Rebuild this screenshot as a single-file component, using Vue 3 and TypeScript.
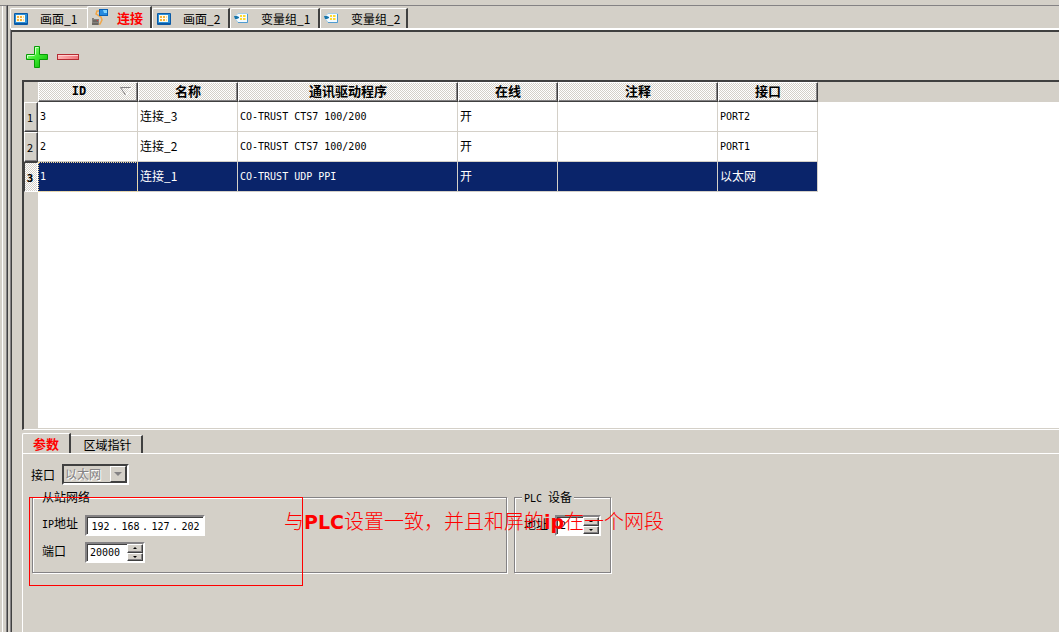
<script setup lang="ts">
import { ref } from 'vue'

interface DocTab { label: string; icon: 'screen' | 'link' | 'tag' }
interface Connection { id: string; name: string; driver: string; online: string; note: string; port: string }

const tabs: DocTab[] = [
  { label: '画面_1', icon: 'screen' },
  { label: '连接', icon: 'link' },
  { label: '画面_2', icon: 'screen' },
  { label: '变量组_1', icon: 'tag' },
  { label: '变量组_2', icon: 'tag' },
]
const columns = ['ID', '名称', '通讯驱动程序', '在线', '注释', '接口']
const rows: Connection[] = [
  { id: '3', name: '连接_3', driver: 'CO-TRUST CTS7 100/200', online: '开', note: '', port: 'PORT2' },
  { id: '2', name: '连接_2', driver: 'CO-TRUST CTS7 100/200', online: '开', note: '', port: 'PORT1' },
  { id: '1', name: '连接_1', driver: 'CO-TRUST UDP PPI', online: '开', note: '', port: '以太网' },
]
const activeTab = ref(1)
const selected = ref(2)
const activePane = ref(0)
const octets = ref(['192', '168', '127', '202'])
const port = ref('20000')
const address = ref('2')
const isLatin = (text: string): boolean => /^[\x20-\x7e]*$/.test(text)
</script>

<template>
  <div class="window">
    <div class="dock-edge"></div>
    <div class="workspace">
      <nav class="doc-tabs">
        <button v-for="(tab, i) in tabs" :key="tab.label" type="button" :class="['doc-tab', tab.icon, { active: i === activeTab }]" @click="activeTab = i">
          <svg v-if="tab.icon === 'screen'" width="14" height="12" viewBox="0 0 14 12">
            <rect width="14" height="12" rx="1" fill="#0a5aa6" />
            <rect x="1" y="1" width="12" height="9" fill="#2b8fd8" />
            <rect x="2" y="2" width="9" height="7" fill="#fffbe6" />
            <path d="M3 3h2v2H3zM6 3h2v2H6zM3 6h2v2H3zM6 6h2v2H6z" fill="#f5b13c" />
            <path d="M9 3h1v2H9zM9 6h1v2H9z" fill="#f8d898" />
          </svg>
          <svg v-else-if="tab.icon === 'link'" width="17" height="17" viewBox="0 0 17 17">
            <path d="M8 2H5L4 5l5 3 1 3-2 4H6" fill="none" stroke="#f0a648" stroke-width="1.500" />
            <rect x="7" y="0" width="9" height="7" fill="#0860b4" />
            <path d="M8 1h7v5H8z" fill="#2489df" /><path d="M11 1h4v3h-3z" fill="#80d4ff" />
            <path d="M0 9h2v1h5v6H0z" fill="#85807c" /><path d="M1 12h5M0 15h6" stroke="#55504d" /><path d="M5 11h1v1H5z" fill="#d33" />
          </svg>
          <svg v-else width="15" height="11" viewBox="0 0 15 11">
            <path d="M4 .5h9.500v9H4L1.500 6V3z" fill="#f4fbff" stroke="#a5cfe8" />
            <path d="M4 9.500h9.500V1" fill="none" stroke="#4e9bd0" />
            <path d="M0 3h3l2 1v1L3 6H1z" fill="#1976ac" />
            <path d="M6 2h2v2H6zM9 2h2v2H9zM6 5h2v2H6zM9 5h2v2H9z" fill="#ffd92e" />
            <path d="M11 2h1v2h-1zM11 5h1v2h-1z" fill="#ffec8a" />
          </svg>
          <span>{{ tab.label }}</span>
        </button>
      </nav>
      <main class="document">
        <div class="tools">
          <button type="button" aria-label="添加">
            <svg width="22" height="22" viewBox="0 0 22 22">
              <defs><linearGradient id="plusFill" x1="0" y1="0" x2="1" y2="1"><stop stop-color="#baffb0" /><stop offset=".45" stop-color="#43ed35" /><stop offset="1" stop-color="#05b500" /></linearGradient></defs>
              <path d="M8.500.5h5v8h8v5h-8v8h-5v-8h-8v-5h8z" fill="url(#plusFill)" stroke="#079c05" />
              <path d="M9.500 8.500v-7h3M1.500 12v-2.500h7" fill="none" stroke="#d0ffc8" />
            </svg>
          </button>
          <button type="button" aria-label="删除">
            <svg width="22" height="6" viewBox="0 0 22 6">
              <defs><linearGradient id="minusFill"><stop stop-color="#ffb5b5" /><stop offset="1" stop-color="#ee747b" /></linearGradient></defs>
              <rect x=".5" y=".5" width="21" height="5" fill="url(#minusFill)" stroke="#b52b32" /><path d="M1 1.500h20" stroke="#ffd0d0" />
            </svg>
          </button>
        </div>
        <section class="grid">
          <div class="head-fill"></div>
          <div class="row-fill"></div>
          <table>
            <colgroup><col class="c-index"><col class="c-id"><col class="c-name"><col class="c-driver"><col class="c-online"><col class="c-note"><col class="c-port"></colgroup>
            <thead>
              <tr>
                <th class="corner"></th>
                <th v-for="(column, i) in columns" :key="column" scope="col" :class="{ sorted: i === 0 }">
                  {{ column }}
                  <svg v-if="i === 0" class="sort" width="12" height="9" viewBox="0 0 12 9"><path d="M11 .5H.5L5.500 8" fill="none" stroke="#848284" /><path d="M11.500 0L6 8.500" stroke="#fff" /></svg>
                </th>
              </tr>
            </thead>
            <tbody>
              <tr v-for="(row, i) in rows" :key="row.id" :class="{ selected: i === selected }" @click="selected = i">
                <th scope="row">{{ i + 1 }}</th>
                <td v-for="(text, key) in row" :key="key" :class="{ latin: isLatin(text) }">{{ text }}</td>
              </tr>
            </tbody>
          </table>
        </section>
        <section class="settings">
          <nav class="pane-tabs">
            <button v-for="(name, i) in ['参数', '区域指针']" :key="name" type="button" :class="{ active: i === activePane }" @click="activePane = i">{{ name }}</button>
          </nav>
          <div class="pane">
            <div class="interface">
              <label for="interface">接口</label>
              <div class="select">
                <select id="interface" disabled><option>以太网</option></select>
                <span class="drop"></span>
              </div>
            </div>
            <div class="groups">
              <section class="group network" aria-labelledby="network-title">
                <h2 id="network-title">从站网络</h2>
                <div class="field">
                  <label for="ip-0"><span class="latin">IP</span>地址</label>
                  <div class="ip">
                    <template v-for="(_, i) in octets" :key="i">
                      <input :id="`ip-${i}`" v-model="octets[i]" :aria-label="`IP地址 ${i + 1}`"><span v-if="i < 3">.</span>
                    </template>
                  </div>
                </div>
                <div class="field">
                  <label for="port">端口</label>
                  <div class="spin"><input id="port" v-model="port"><span class="arrows"><button type="button" aria-label="增加"></button><button type="button" class="down" aria-label="减少"></button></span></div>
                </div>
              </section>
              <section class="group device" aria-labelledby="device-title">
                <h2 id="device-title"><span class="latin">PLC </span>设备</h2>
                <div class="field">
                  <label for="address">地址</label>
                  <div class="spin small"><input id="address" v-model="address"><span class="arrows"><button type="button" aria-label="增加"></button><button type="button" class="down" aria-label="减少"></button></span></div>
                </div>
              </section>
              <div class="marker"></div>
              <p class="remark">与<b>PLC</b>设置一致，并且和屏的<b>ip</b>在一个网段</p>
            </div>
          </div>
        </section>
      </main>
    </div>
  </div>
</template>

<style>
body { margin: 0; background: #d4d0c8; }
</style>

<style scoped>
* { box-sizing: border-box; }
.window { display: flex; min-height: 100vh; background: #d4d0c8; color: #000; font: 12px/16px "Noto Sans CJK SC", sans-serif; overflow: hidden; }
button, input, select { font: inherit; color: inherit; margin: 0; padding: 0; border: 0; border-radius: 0; background: none; }
svg { display: block; flex: none; }
.latin { font-family: "DejaVu Sans Mono", monospace; font-size: 10px; }
.dock-edge { flex: none; width: 8px; margin-top: 5px; border-top: 1px solid #848284; border-right: 1px solid #404040; box-shadow: inset -1px 0 #848284, inset 2px 0 #d4d0c8, inset 3px 0 #fff; }
.workspace { flex: 1; min-width: 0; display: flex; flex-direction: column; margin-top: 5px; border-top: 1px solid #848284; padding-left: 2px; }
.doc-tabs { display: flex; align-items: flex-end; height: 22px; }
.doc-tab { display: flex; align-items: center; height: 20px; padding: 0 8px 0 3px; gap: 12px; border-top: 1px solid #fff; border-left: 1px solid #fff; border-right: 2px solid #404040; border-top-left-radius: 2px; white-space: nowrap; }
.doc-tab.screen { width: 78px; padding-left: 4px; }
.doc-tab.screen:first-child { border-right: 0; width: 77px; padding-left: 3px; }
.doc-tab.tag { width: 90px; }
.doc-tab.tag:last-child { width: 88px; }
.doc-tab.link { height: 22px; width: 65px; gap: 8px; padding-left: 4px; }
.doc-tab.active { color: #f00; font-weight: 700; font-size: 13px; }
.document { flex: 1; display: flex; flex-direction: column; border-top: 2px solid #fff; border-left: 1px solid #848284; box-shadow: inset 1px 2px #404040; padding-left: 11px; }
.tools { display: flex; align-items: center; gap: 9px; height: 50px; padding: 4px 0 0 4px; }
.grid { position: relative; height: 350px; background: #fff; border-top: 2px solid #404040; border-left: 2px solid #404040; border-bottom: 1px solid #fff; box-shadow: inset 0 -1px #d4d0c8; }
.head-fill { position: absolute; inset: 0 0 auto 0; height: 20px; background: #d4d0c8; }
.row-fill { position: absolute; inset: 0 auto 0 0; width: 14px; background: #d4d0c8; }
table { position: relative; width: 794px; table-layout: fixed; border-collapse: separate; border-spacing: 0; }
.c-index { width: 14px; } .c-id, .c-name, .c-online, .c-port { width: 100px; } .c-driver { width: 220px; } .c-note { width: 160px; }
th, td { padding: 0; }
thead th { position: relative; height: 20px; padding-bottom: 2px; font-size: 13px; line-height: 16px; border: solid; border-width: 1px; border-color: #fff #404040 #404040 #fff; background: repeating-conic-gradient(#fff 0 25%, #d4d0c8 0 50%) 0 0 / 2px 2px; box-shadow: inset -1px -1px #848284; }
thead th.corner { border: 0; background: #d4d0c8; box-shadow: none; }
thead th.sorted { padding-right: 18px; font-family: "DejaVu Sans Mono", monospace; font-size: 12px; }
.sort { position: absolute; right: 5px; top: 4px; }
tbody th { height: 30px; padding-right: 2px; font-size: 11px; font-weight: 400; border: solid; border-width: 1px; border-color: #fff #404040 #404040 #fff; box-shadow: inset -1px -1px #848284; }
tbody td { height: 30px; padding: 0 2px 2px; border-right: 1px solid #d4d0c8; border-bottom: 1px solid #d4d0c8; white-space: nowrap; }
tbody td.latin { padding-bottom: 0; }
.selected td { background: #0a246a; color: #fff; }
.selected td:nth-child(2) { outline: 1px dotted #f5db95; outline-offset: -1px; }
.selected th { font-weight: 700; border-color: #404040 #fff #fff #404040; box-shadow: none; background: repeating-conic-gradient(#fff 0 25%, #d4d0c8 0 50%) 0 0 / 2px 2px; }
.settings { flex: 1; display: flex; flex-direction: column; padding-top: 3px; }
.pane-tabs { display: flex; align-items: flex-end; height: 20px; }
.pane-tabs button { height: 18px; width: 72px; padding-left: 3px; border-top: 1px solid #fff; border-right: 2px solid #404040; }
.pane-tabs button.active { width: 49px; height: 20px; padding-left: 0; border-left: 1px solid #fff; border-radius: 2px 0 0 0; color: #f00; font-size: 13px; font-weight: 700; }
.pane { flex: 1; border-left: 1px solid #fff; border-top: 1px solid #fff; padding: 10px 0 0 8px; }
.interface { display: flex; align-items: center; gap: 7px; height: 21px; }
.select { display: flex; align-items: center; width: 67px; height: 21px; border: 2px solid; border-color: #404040 #fff #fff #404040; box-shadow: inset -1px -1px #404040; padding: 0 1px 1px 0; }
.select select { appearance: none; flex: 1; min-width: 0; padding-left: 1px; color: #848284; opacity: 1; text-shadow: 1px 1px #fff; }
.drop { width: 16px; height: 16px; display: grid; place-items: center; border: 1px solid; border-color: #fff #404040 #404040 #fff; }
.drop::after { content: ""; border: 4px solid transparent; border-top-color: #848284; border-bottom: 0; }
.groups { position: relative; display: flex; gap: 7px; padding: 12px 0 0 1px; }
.group { position: relative; height: 76px; border: 1px solid #848284; box-shadow: inset 1px 1px #fff, 1px 1px #fff; padding: 17px 0 0 9px; }
.network { width: 475px; }
.device { width: 97px; }
h2 { position: absolute; left: 7px; top: -9px; margin: 0; padding: 0 2px; font: inherit; background: #d4d0c8; white-space: pre; }
.network h2 { background: none; }
.field { display: flex; align-items: center; height: 21px; margin-bottom: 6px; }
.field label { width: 43px; padding-bottom: 4px; }
.device .field label { width: 31px; }
.ip, .spin { display: flex; align-items: center; height: 21px; background: #fff; border: 2px solid; border-color: #848284 #fff #fff #848284; box-shadow: inset 1px 1px #404040; font: 10px/16px "DejaVu Sans Mono", monospace; }
.ip { width: 120px; padding: 2px 0 0 2px; }
.ip input { width: 23px; text-align: center; }
.ip span { width: 7px; }
.spin { width: 60px; }
.spin.small { width: 46px; }
.spin input { flex: 1; min-width: 0; padding-left: 3px; }
.arrows { display: grid; grid-template-rows: 1fr 1fr; width: 16px; height: 17px; }
.arrows button { display: grid; place-items: center; background: #d4d0c8; border: 1px solid; border-color: #fff #404040 #404040 #fff; box-shadow: inset -1px -1px #848284; }
.arrows button::after { content: ""; border: 2px solid transparent; border-bottom-color: #000; border-top: 0; }
.arrows button.down::after { border-top: 2px solid #000; border-bottom: 0; }
.marker { position: absolute; left: -2px; top: 12px; width: 274px; height: 89px; border: 1px solid #f00; pointer-events: none; }
.remark { position: absolute; left: 253px; top: 22px; margin: 0; color: #f00; font-size: 20px; line-height: 28px; font-weight: 300; white-space: nowrap; pointer-events: none; }
.remark b { font-family: "DejaVu Sans", sans-serif; font-size: 19px; font-weight: 700; }
</style>
